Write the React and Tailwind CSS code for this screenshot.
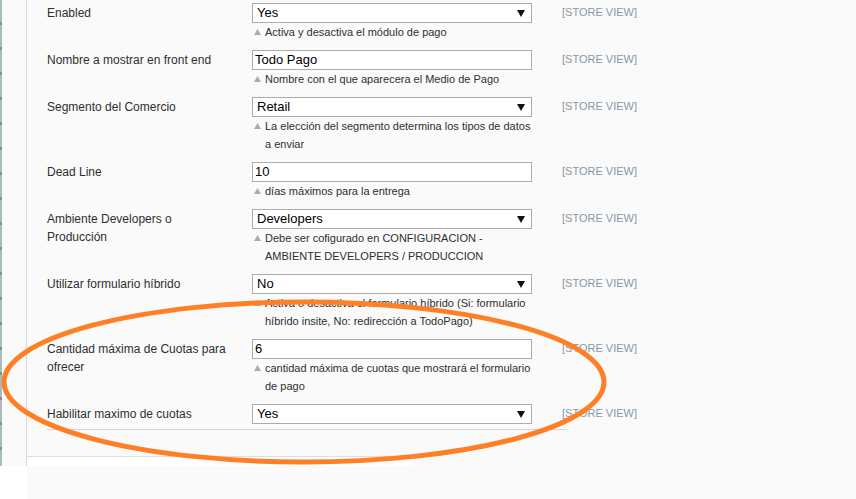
import React from "react";

const rows = [
  { label: "Enabled", type: "select", value: "Yes", hint: ["Activa y desactiva el módulo de pago"] },
  { label: "Nombre a mostrar en front end", type: "text", value: "Todo Pago", hint: ["Nombre con el que aparecera el Medio de Pago"] },
  {
    label: "Segmento del Comercio",
    type: "select",
    value: "Retail",
    hint: ["La elección del segmento determina los tipos de datos a enviar"],
  },
  { label: "Dead Line", type: "text", value: "10", hint: ["días máximos para la entrega"] },
  {
    label: "Ambiente Developers o Producción",
    type: "select",
    value: "Developers",
    hint: ["Debe ser cofigurado en CONFIGURACION -", "AMBIENTE DEVELOPERS / PRODUCCION"],
  },
  {
    label: "Utilizar formulario híbrido",
    type: "select",
    value: "No",
    hint: ["Activa o desactiva el formulario híbrido (Si: formulario híbrido insite, No: redirección a TodoPago)"],
  },
  {
    label: "Cantidad máxima de Cuotas para ofrecer",
    type: "text",
    value: "6",
    hint: ["cantidad máxima de cuotas que mostrará el formulario de pago"],
  },
  { label: "Habilitar maximo de cuotas", type: "select", value: "Yes", hint: null },
];

function Field({ type, value }) {
  if (type === "select") {
    return (
      <div className="h-[20px] w-[280px] bg-white border border-[#acacac] flex items-center justify-between pl-[4px] pr-[6px] text-[13px] text-black">
        <span>{value}</span>
        <svg className="block" width="8" height="7" viewBox="0 0 8 7">
          <path d="M0 0H8L4 7Z" fill="#111" />
        </svg>
      </div>
    );
  }
  return (
    <div className="h-[20px] w-[280px] bg-white border border-[#acacac] flex items-center pl-[2px] text-[13px] text-black">
      {value}
    </div>
  );
}

function Row({ row, last }) {
  return (
    <div className={"flex " + (last ? "pb-[5px]" : "pb-[9px]")}>
      <div className="w-[205px] shrink-0">
        <div className="w-[183px] text-[12px] leading-[18px] pt-[1px] text-[#2f2f2f]">{row.label}</div>
      </div>
      <div className="w-[280px] shrink-0">
        <Field type={row.type} value={row.value} />
        {row.hint && (
          <div className="flex text-[11px] leading-[18px] text-[#2f2f2f]">
            <div className="w-[13px] shrink-0 pl-[2px] pt-[6px]">
              <svg className="block" width="7" height="6" viewBox="0 0 7 6">
                <path d="M0 6H7L3.5 0Z" fill="#a5adb4" />
              </svg>
            </div>
            <div>
              {row.hint.map((h, i) => (
                <div key={i}>{h}</div>
              ))}
            </div>
          </div>
        )}
      </div>
      <div className="pl-[30px] whitespace-nowrap text-[11px] leading-[18px] text-[#8798a6]">[STORE VIEW]</div>
    </div>
  );
}

export default function App() {
  return (
    <div
      className="relative w-[856px] h-[499px] overflow-hidden bg-[#fafafa] flex"
      style={{ fontFamily: '"Liberation Sans", Arial, sans-serif' }}
    >
      <div className="w-[27px] shrink-0 flex flex-col">
        <div className="h-[466px] flex border-r border-[#d9d9d9]">
          <div className="w-[2px] bg-[repeating-linear-gradient(to_bottom,#a9bbbe_0px,#a9bbbe_22px,#7d9298_22px,#7d9298_25px)]" />
        </div>
        <div className="flex-1 bg-white" />
      </div>

      <div className="flex-1 flex flex-col">
        <div className="pl-[20px] pt-[3px]">
          <div className="w-[520px] border-b border-[#d6d6d6]">
            {rows.map((r, i) => (
              <Row key={i} row={r} last={i === rows.length - 1} />
            ))}
          </div>
        </div>
        <div className="mt-[26px] w-[386px] border-b border-[#dedede] h-0" />
        <div className="w-[386px] h-[9px] bg-white" />
      </div>

      <svg className="absolute left-0 top-0 pointer-events-none" width="856" height="499">
        <ellipse cx="304" cy="382" rx="300" ry="80" fill="none" stroke="#ff7f27" strokeWidth="5" />
      </svg>
    </div>
  );
}
